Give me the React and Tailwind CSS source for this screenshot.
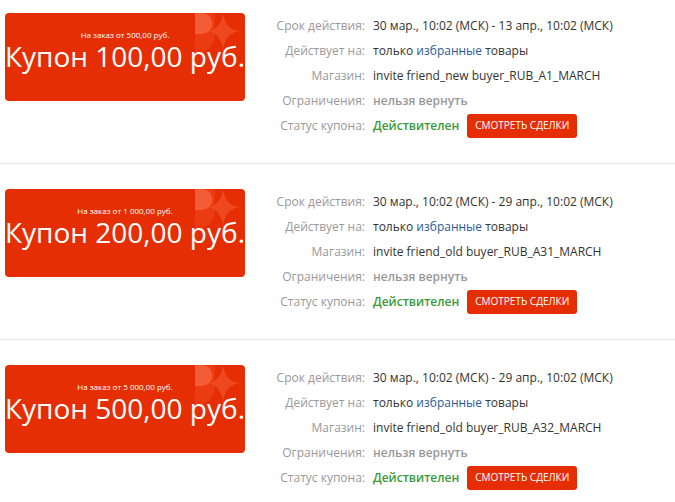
const coupons = [
  {
    min: 'На заказ от 500,00 руб.',
    amount: 'Купон 100,00 руб.',
    period: '30 мар., 10:02 (МСК) - 13 апр., 10:02 (МСК)',
    store: 'invite friend_new buyer_RUB_A1_MARCH',
  },
  {
    min: 'На заказ от 1 000,00 руб.',
    amount: 'Купон 200,00 руб.',
    period: '30 мар., 10:02 (МСК) - 29 апр., 10:02 (МСК)',
    store: 'invite friend_old buyer_RUB_A31_MARCH',
  },
  {
    min: 'На заказ от 5 000,00 руб.',
    amount: 'Купон 500,00 руб.',
    period: '30 мар., 10:02 (МСК) - 29 апр., 10:02 (МСК)',
    store: 'invite friend_old buyer_RUB_A32_MARCH',
  },
]

// corner pattern in the top-right of the coupon
function Decoration() {
  return (
    <svg className="absolute right-0 top-0" width="50" height="44" viewBox="0 0 50 44">
      <path d="M0 0 H20 V22 A18 18 0 0 1 2 40 H0 Z" fill="#ea3b13" />
      <path d="M0 0 H7 A10.5 10.5 0 0 1 7 21 H0 Z" fill="#f45b37" />
      <path d="M28 0 Q30 16 44 18 Q30 20 28 38 Q26 20 13 18 Q26 16 28 0 Z" fill="#ef4820" />
    </svg>
  )
}

function Row({ label, children }) {
  return (
    <div className="flex h-[25px] items-center">
      <div className="w-[120px] text-right text-[#999]">{label}</div>
      <div className="flex items-center pl-[8px] text-[#333]">{children}</div>
    </div>
  )
}

function Coupon({ coupon, first }) {
  return (
    <div className={`flex border-b border-[#e8e8e8] pb-[25px] ${first ? 'pt-[13px]' : 'pt-[25px]'}`}>
      <div className="relative ml-[5px] flex h-[88px] w-[240px] flex-col items-center overflow-hidden rounded-[4px] bg-[#e62e04] text-white">
        <Decoration />
        <div className="relative mt-[17px] text-[8px] leading-[9px]">{coupon.min}</div>
        <div className="relative mt-[2px] whitespace-nowrap text-[28px] leading-[30px]">{coupon.amount}</div>
      </div>
      <div className="text-[12px]">
        <Row label="Срок действия:">{coupon.period}</Row>
        <Row label="Действует на:">
          только&nbsp;<span className="text-[#2d5b9a]">избранные</span>&nbsp;товары
        </Row>
        <Row label="Магазин:">{coupon.store}</Row>
        <Row label="Ограничения:">
          <span className="font-semibold text-[#999]">нельзя вернуть</span>
        </Row>
        <Row label="Статус купона:">
          <span className="font-semibold text-[#3a9a3a]">Действителен</span>
          <button className="ml-[8px] h-[24px] rounded-[3px] bg-[#e62e04] px-[8px] text-[10px] uppercase text-white">
            Смотреть сделки
          </button>
        </Row>
      </div>
    </div>
  )
}

export default function App() {
  return (
    <div className="h-[502px] w-[675px] overflow-hidden bg-white font-['Open_Sans',sans-serif]">
      {coupons.map((c, i) => (
        <Coupon key={i} coupon={c} first={i === 0} />
      ))}
    </div>
  )
}
